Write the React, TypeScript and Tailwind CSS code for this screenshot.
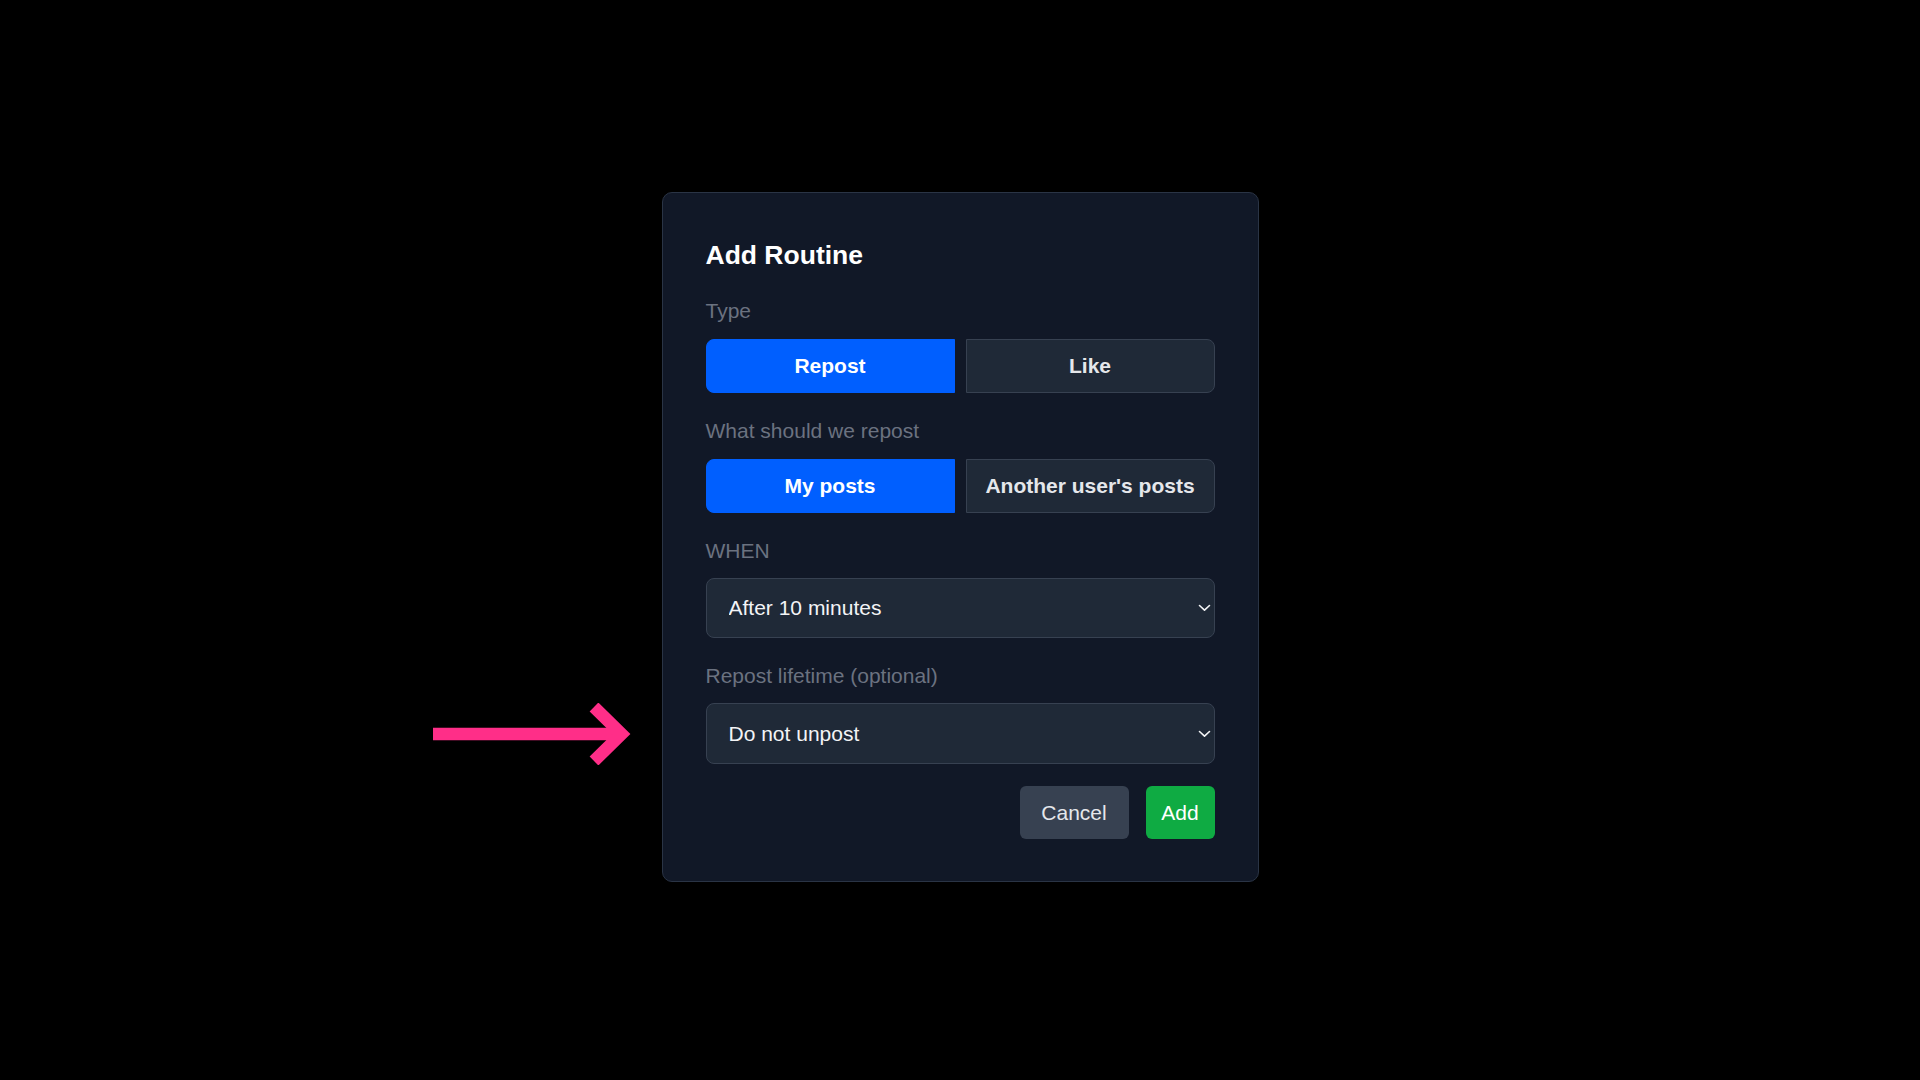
import { useState } from "react";

const Chevron = () => (
  <svg
    className="pointer-events-none absolute right-[4px] top-1/2 -translate-y-1/2"
    width="13"
    height="8"
    viewBox="0 0 13 8"
    fill="none"
  >
    <path d="M1.5 1.5 L6.5 6.2 L11.5 1.5" stroke="#f3f4f6" strokeWidth="1.6" strokeLinecap="round" strokeLinejoin="round" />
  </svg>
);

function Segmented({ options, value, onChange }: { options: string[]; value: string; onChange: (v: string) => void }) {
  return (
    <div className="grid grid-cols-2 gap-[11px]">
      {options.map((o, i) => (
        <button
          key={o}
          onClick={() => onChange(o)}
          className={`h-[54px] border text-[21px] font-bold ${i === 0 ? "rounded-l-[8px]" : "rounded-r-[8px]"} ${
            value === o
              ? "bg-[#005fff] border-[#005fff] text-white"
              : "bg-[#1f2937] border-[#374151] text-[#e5e7eb]"
          }`}
        >
          {o}
        </button>
      ))}
    </div>
  );
}

function Field({ label, children, className = "" }: { label: string; children: React.ReactNode; className?: string }) {
  return (
    <div className={`flex flex-col ${className}`}>
      <span className="text-[21px] leading-[28px] text-[#6b7280]">{label}</span>
      {children}
    </div>
  );
}

export default function App() {
  const [type, setType] = useState("Repost");
  const [what, setWhat] = useState("My posts");

  return (
    <div className="relative min-h-screen w-full bg-black font-['Liberation_Sans',Arial,sans-serif] flex justify-center pt-[192px]">
      {/* annotation arrow */}
      <svg className="absolute left-[432px] top-[703px]" width="204" height="62" viewBox="0 0 204 62" fill="none">
        <path d="M1 31 H189" stroke="#ff2e88" strokeWidth="12.5" />
        <path d="M162 4 L189.5 31 L162 58" stroke="#ff2e88" strokeWidth="12.5" strokeLinejoin="miter" />
      </svg>

      <div className="w-[597px] h-[690px] rounded-[10px] border border-[#2a3445] bg-[#111827] px-[43px] pt-[46px] pb-[42px] flex flex-col">
        <h2 className="text-[26.5px] leading-[32px] font-bold text-white">Add Routine</h2>

        <Field label="Type" className="mt-[26px] gap-[14px]">
          <Segmented options={["Repost", "Like"]} value={type} onChange={setType} />
        </Field>

        <Field label="What should we repost" className="mt-[24px] gap-[14px]">
          <Segmented options={["My posts", "Another user's posts"]} value={what} onChange={setWhat} />
        </Field>

        <Field label="WHEN" className="mt-[24px] gap-[13px]">
          <div className="relative">
            <select className="appearance-none w-full h-[60px] rounded-[8px] border border-[#374151] bg-[#1f2937] pl-[22px] text-[21px] text-[#f3f4f6] font-['Liberation_Sans',Arial,sans-serif] outline-none">
              <option>After 10 minutes</option>
              <option>After 30 minutes</option>
              <option>After 1 hour</option>
            </select>
            <Chevron />
          </div>
        </Field>

        <Field label="Repost lifetime (optional)" className="mt-[24px] gap-[13px]">
          <div className="relative">
            <select className="appearance-none w-full h-[61px] rounded-[8px] border border-[#374151] bg-[#1f2937] pl-[22px] text-[21px] text-[#f3f4f6] font-['Liberation_Sans',Arial,sans-serif] outline-none">
              <option>Do not unpost</option>
              <option>1 hour</option>
              <option>1 day</option>
            </select>
            <Chevron />
          </div>
        </Field>

        <div className="mt-[22px] flex justify-end gap-[17px]">
          <button className="h-[53px] w-[109px] rounded-[6px] bg-[#374151] text-[21px] text-[#e5e7eb]">Cancel</button>
          <button className="h-[53px] w-[69px] rounded-[6px] bg-[#0fab43] text-[21px] text-white">Add</button>
        </div>
      </div>
    </div>
  );
}
